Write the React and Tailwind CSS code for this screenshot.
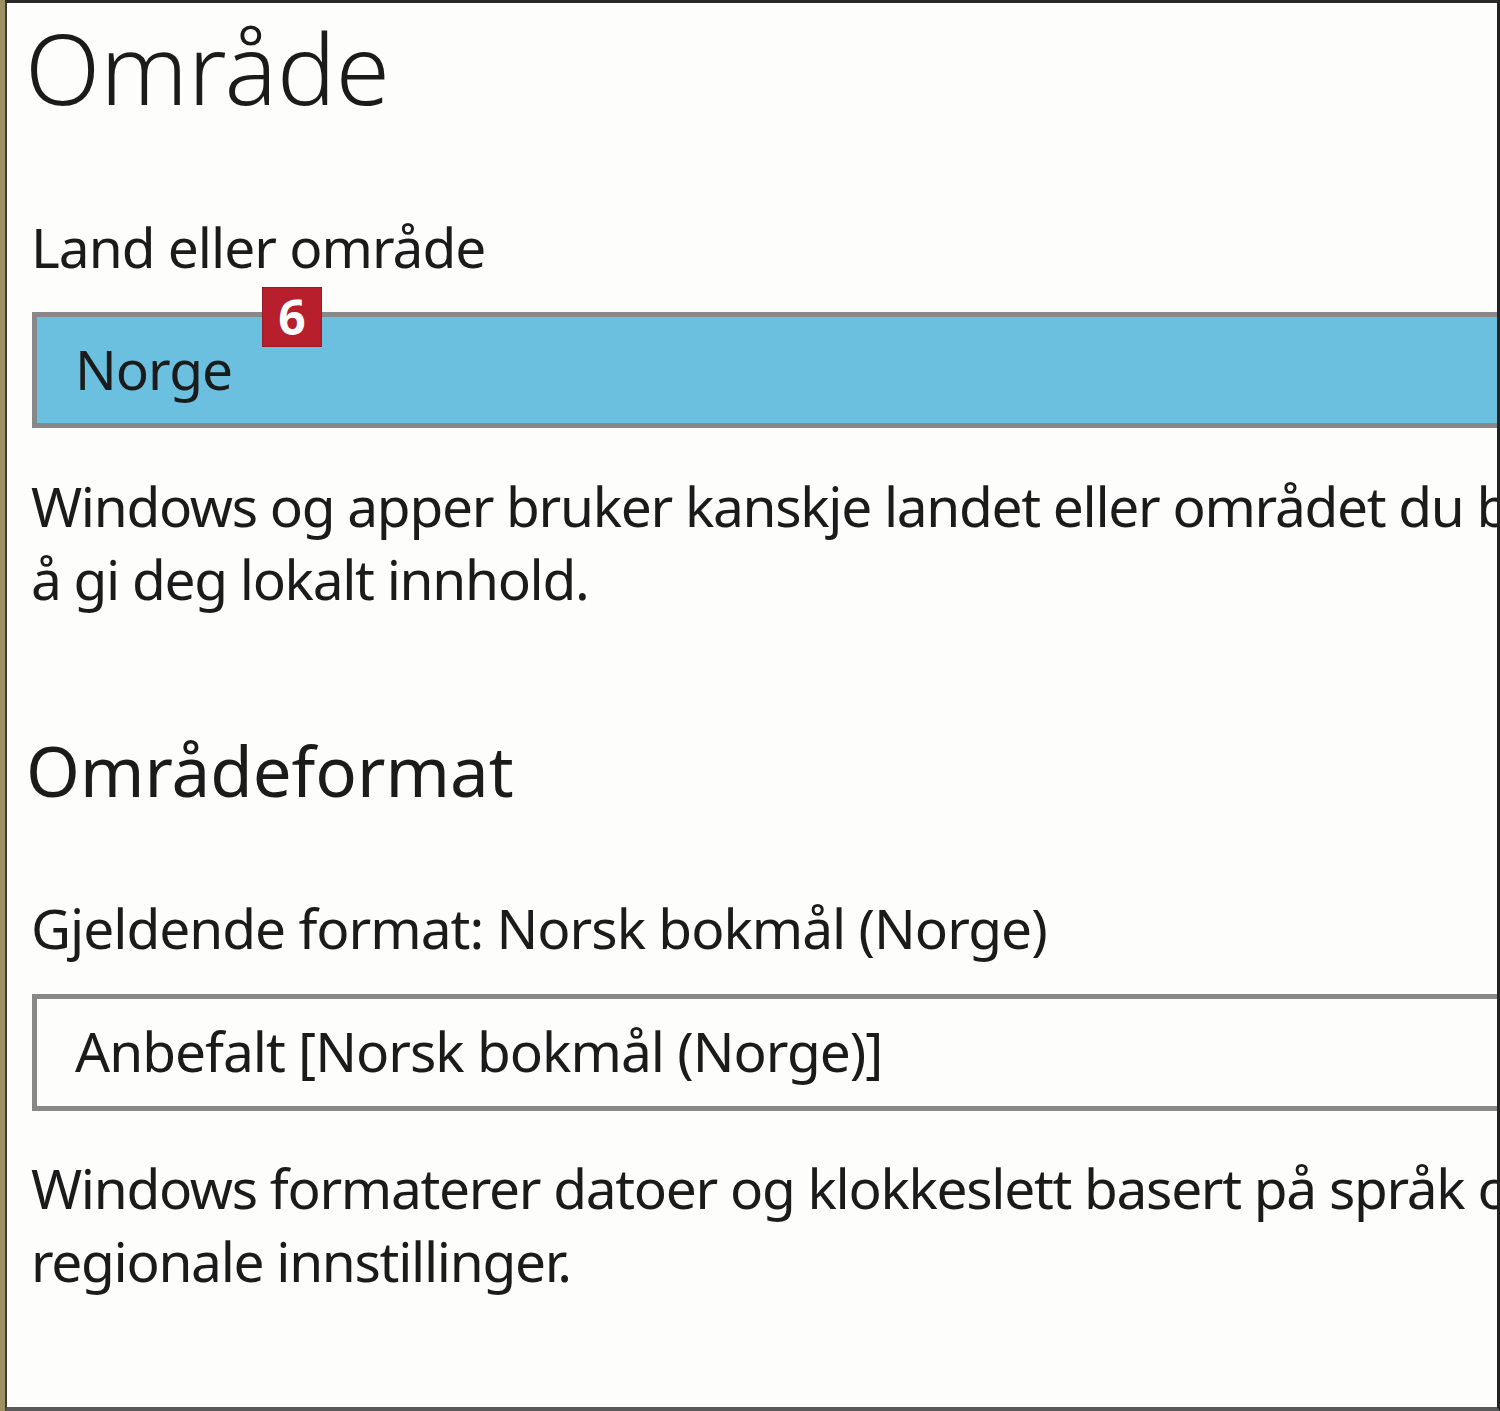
import React from "react";

const font = { fontFamily: '"Noto Sans", "Open Sans", Arial, sans-serif' };

export default function App() {
  return (
    <div
      className="w-[1500px] h-[1411px] bg-[#fdfdfb] border-l-[5px] border-l-[#9d9161] overflow-hidden"
      style={font}
    >
      <div className="w-full h-full border-l-[2px] border-l-[#3a3a3a] border-t-[3px] border-t-[#2a2a2a] border-r-[3px] border-r-[#222] border-b-[4px] border-b-[#5a5a5a] overflow-hidden relative text-[#1b1b1b]">
        <div className="pl-[24px] w-[1600px]">
          <div className="mt-[14px] ml-[-6px] h-[100px] leading-[100px] text-[98px] font-light whitespace-nowrap">
            Område
          </div>
          <div className="mt-[95px] h-[70px] leading-[70px] text-[55px] tracking-[-1px] whitespace-nowrap">
            Land eller område
          </div>
          <div className="relative mt-[30px] ml-[1px] w-[1520px] h-[116px] border-[5px] border-[#888888] bg-[#6bbfdf]">
            <div className="pl-[38px] h-[106px] leading-[104px] text-[55px] tracking-[-1px] whitespace-nowrap">
              Norge
            </div>
            <div className="absolute left-[225px] top-[-30px] w-[60px] h-[60px] bg-[#b81f2d] border border-[#9a1a26] flex items-center justify-center text-white font-bold text-[48px] leading-none">
              6
            </div>
          </div>
          <div className="mt-[41px] text-[55px] tracking-[-1.3px] leading-[73px] whitespace-nowrap">
            <div>Windows og apper bruker kanskje landet eller området du bor i, for</div>
            <div>å gi deg lokalt innhold.</div>
          </div>
          <div className="mt-[115px] ml-[-5px] h-[80px] leading-[80px] text-[69px] whitespace-nowrap">
            Områdeformat
          </div>
          <div className="mt-[83px] h-[70px] leading-[70px] text-[55px] tracking-[-1px] whitespace-nowrap">
            Gjeldende format: Norsk bokmål (Norge)
          </div>
          <div className="mt-[31px] ml-[1px] w-[1520px] h-[117px] border-[5px] border-[#888888] bg-[#fdfdfb]">
            <div className="pl-[38px] h-[107px] leading-[104px] text-[55px] tracking-[-1px] whitespace-nowrap">
              Anbefalt [Norsk bokmål (Norge)]
            </div>
          </div>
          <div className="mt-[40px] text-[55px] tracking-[-1.3px] leading-[73px] whitespace-nowrap">
            <div>Windows formaterer datoer og klokkeslett basert på språk og</div>
            <div>regionale innstillinger.</div>
          </div>
        </div>
      </div>
    </div>
  );
}
